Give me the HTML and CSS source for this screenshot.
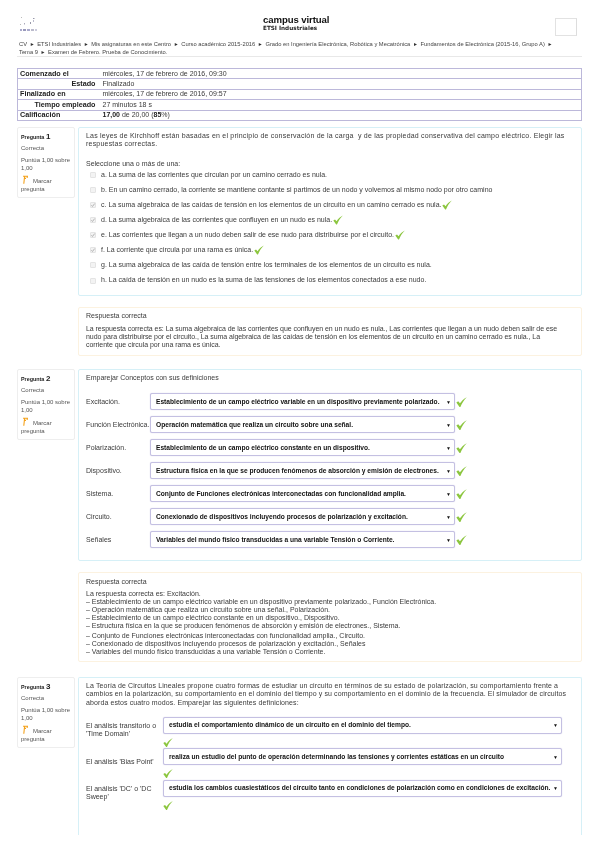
FILE: index.html
```html
<!DOCTYPE html>
<html lang="es">
<head>
<meta charset="utf-8">
<title>campus virtual</title>
<link rel="stylesheet" href="styles.css">
</head>
<body>
<svg class="defs" width="0" height="0" aria-hidden="true">
  <symbol id="ok" viewBox="0 0 10 10"><path d="M0.3 5.4 L2 4.4 L3.6 6.2 C5 4 7 2 9.8 0.6 C7.4 3 5.4 6 4 9.6 L3.2 9.6 Z" fill="#8cc63f"/></symbol>
  <symbol id="tk" viewBox="0 0 7 7"><path d="M1.6 3.8 L2.9 5.2 L5.5 1.8" fill="none" stroke="#a8a8a8" stroke-width="1"/></symbol>
  <symbol id="fl" viewBox="0 0 7 9"><path d="M1.8 8.8 L2.6 1.4 M1 1.2 H6 M5.2 1.2 V3 M2.6 3.4 H4" fill="none" stroke="#f4a21c" stroke-width="1.1"/></symbol>
</svg>

<header class="top">
  <svg class="logo" viewBox="0 0 18 15" aria-hidden="true">
    <rect x="1" y="0" width="1" height="1" fill="#bbb"/><rect x="13" y="1" width="1.5" height="1" fill="#99a"/><rect x="13" y="3" width="1" height="2" fill="#bbc"/>
    <rect x="4" y="6" width="1" height="1.5" fill="#aab"/><rect x="10" y="5" width="1" height="2" fill="#99a"/><rect x="0" y="7" width="1" height="1" fill="#bbb"/>
    <rect x="0" y="12" width="2" height="2" fill="#aac"/><rect x="3" y="12" width="3" height="2" fill="#99b"/><rect x="7" y="12" width="3" height="2" fill="#aac"/><rect x="11" y="12" width="3" height="2" fill="#bbc"/><rect x="15" y="12" width="2" height="2" fill="#ccd"/>
  </svg>
  <div class="brand">
    <div class="brand-name">campus virtual</div>
    <div class="brand-sub">ETSI Industriales</div>
  </div>
  <div class="topbox"></div>
</header>

<nav class="crumbs">CV <i>►</i> ETSI Industriales <i>►</i> Mis asignaturas en este Centro <i>►</i> Curso académico 2015-2016 <i>►</i> Grado en Ingeniería Electrónica, Robótica y Mecatrónica <i>►</i> Fundamentos de Electrónica (2015-16, Grupo A) <i>►</i> Tema 9 <i>►</i> Examen de Febrero. Prueba de Conocimiento.</nav>
<hr class="rule">

<table class="summary">
  <tr><th>Comenzado el</th><td>miércoles, 17 de febrero de 2016, 09:30</td></tr>
  <tr><th class="r">Estado</th><td>Finalizado</td></tr>
  <tr><th>Finalizado en</th><td>miércoles, 17 de febrero de 2016, 09:57</td></tr>
  <tr><th class="r">Tiempo empleado</th><td>27 minutos 18 s</td></tr>
  <tr><th>Calificación</th><td><b>17,00</b> de 20,00 (<b>85</b>%)</td></tr>
</table>

<section class="q q1">
  <aside class="info">
    <div class="qno">Pregunta <span>1</span></div>
    <div class="state">Correcta</div>
    <div class="grade">Puntúa 1,00 sobre 1,00</div>
    <div class="flag"><svg class="flagi"><use href="#fl"/></svg>Marcar pregunta</div>
  </aside>
  <div class="main m1">
    <p class="qtext">Las leyes de Kirchhoff están basadas en el principio de conservación de la carga&nbsp; y de las propiedad conservativa del campo eléctrico. Elegir las respuestas correctas.</p>
    <p class="prompt">Seleccione una o más de una:</p>
    <div class="opt"><span class="cb"></span>a. La suma de las corrientes que circulan por un camino cerrado es nula.</div>
    <div class="opt"><span class="cb"></span>b. En un camino cerrado, la corriente se mantiene contante si partimos de un nodo y volvemos al mismo nodo por otro camino</div>
    <div class="opt"><span class="cb"><svg><use href="#tk"/></svg></span>c. La suma algebraica de las caídas de tensión en los elementos de un circuito en un camino cerrado es nula.<svg class="ok"><use href="#ok"/></svg></div>
    <div class="opt"><span class="cb"><svg><use href="#tk"/></svg></span>d. La suma algebraica de las corrientes que confluyen en un nudo es nula.<svg class="ok"><use href="#ok"/></svg></div>
    <div class="opt"><span class="cb"><svg><use href="#tk"/></svg></span>e. Las corrientes que llegan a un nudo deben salir de ese nudo para distribuirse por el circuito.<svg class="ok"><use href="#ok"/></svg></div>
    <div class="opt"><span class="cb"><svg><use href="#tk"/></svg></span>f. La corriente que circula por una rama es única.<svg class="ok"><use href="#ok"/></svg></div>
    <div class="opt"><span class="cb"></span>g. La suma algebraica de las caída de tensión entre los terminales de los elementos de un circuito es nula.</div>
    <div class="opt"><span class="cb"></span>h. La caída de tensión en un nudo es la suma de las tensiones de los elementos conectados a ese nudo.</div>
  </div>
</section>

<div class="fb f1">
  <p class="fbhead">Respuesta correcta</p>
  <p class="fbtext">La respuesta correcta es: La suma algebraica de las corrientes que confluyen en un nudo es nula., Las corrientes que llegan a un nudo deben salir de ese nudo para distribuirse por el circuito., La suma algebraica de las caídas de tensión en los elementos de un circuito en un camino cerrado es nula., La corriente que circula por una rama es única.</p>
</div>

<section class="q q2">
  <aside class="info">
    <div class="qno">Pregunta <span>2</span></div>
    <div class="state">Correcta</div>
    <div class="grade">Puntúa 1,00 sobre 1,00</div>
    <div class="flag"><svg class="flagi"><use href="#fl"/></svg>Marcar pregunta</div>
  </aside>
  <div class="main m2">
    <p class="qtext">Emparejar Conceptos con sus definiciones</p>
    <div class="match">
      <div class="mrow"><span class="mlabel">Excitación.</span><div class="sel"><span>Establecimiento de un campo eléctrico variable en un dispositivo previamente polarizado.</span><i>▼</i></div><svg class="ok"><use href="#ok"/></svg></div>
      <div class="mrow"><span class="mlabel">Función Electrónica.</span><div class="sel"><span>Operación matemática que realiza un circuito sobre una señal.</span><i>▼</i></div><svg class="ok"><use href="#ok"/></svg></div>
      <div class="mrow"><span class="mlabel">Polarización.</span><div class="sel"><span>Establecimiento de un campo eléctrico constante en un dispositivo.</span><i>▼</i></div><svg class="ok"><use href="#ok"/></svg></div>
      <div class="mrow"><span class="mlabel">Dispositivo.</span><div class="sel"><span>Estructura física en la que se producen fenómenos de absorción y emisión de electrones.</span><i>▼</i></div><svg class="ok"><use href="#ok"/></svg></div>
      <div class="mrow"><span class="mlabel">Sistema.</span><div class="sel"><span>Conjunto de Funciones electrónicas interconectadas con funcionalidad amplia.</span><i>▼</i></div><svg class="ok"><use href="#ok"/></svg></div>
      <div class="mrow"><span class="mlabel">Circuito.</span><div class="sel"><span>Conexionado de dispositivos incluyendo procesos de polarización y excitación.</span><i>▼</i></div><svg class="ok"><use href="#ok"/></svg></div>
      <div class="mrow"><span class="mlabel">Señales</span><div class="sel"><span>Variables del mundo físico transducidas a una variable Tensión o Corriente.</span><i>▼</i></div><svg class="ok"><use href="#ok"/></svg></div>
    </div>
  </div>
</section>

<div class="fb f2">
  <p class="fbhead">Respuesta correcta</p>
  <p>La respuesta correcta es: Excitación.<br>– Establecimiento de un campo eléctrico variable en un dispositivo previamente polarizado., Función Electrónica.<br>– Operación matemática que realiza un circuito sobre una señal., Polarización.<br>– Establecimiento de un campo eléctrico constante en un dispositivo., Dispositivo.<br>– Estructura física en la que se producen fenómenos de absorción y emisión de electrones., Sistema.</p>
  <p class="cont">– Conjunto de Funciones electrónicas interconectadas con funcionalidad amplia., Circuito.<br>– Conexionado de dispositivos incluyendo procesos de polarización y excitación., Señales<br>– Variables del mundo físico transducidas a una variable Tensión o Corriente.</p>
</div>

<section class="q q3">
  <aside class="info">
    <div class="qno">Pregunta <span>3</span></div>
    <div class="state">Correcta</div>
    <div class="grade">Puntúa 1,00 sobre 1,00</div>
    <div class="flag"><svg class="flagi"><use href="#fl"/></svg>Marcar pregunta</div>
  </aside>
  <div class="main m3">
    <p class="qtext">La Teoría de Circuitos Lineales propone cuatro formas de estudiar un circuito en términos de su estado de polarización, su comportamiento frente a cambios en la polarización, su comportamiento en el dominio del tiempo y su comportamiento en el dominio de la frecuencia. El simulador de circuitos aborda estos cuatro modos. Emparejar las siguientes definiciones:</p>
    <div class="wide">
      <div class="wrow"><span class="mlabel">El análisis transitorio o 'Time Domain'</span><div class="wcol"><div class="sel"><span>estudia el comportamiento dinámico de un circuito en el dominio del tiempo.</span><i>▼</i></div><svg class="ok"><use href="#ok"/></svg></div></div>
      <div class="wrow"><span class="mlabel">El análisis 'Bias Point'</span><div class="wcol"><div class="sel"><span>realiza un estudio del punto de operación determinando las tensiones y corrientes estáticas en un circuito</span><i>▼</i></div><svg class="ok"><use href="#ok"/></svg></div></div>
      <div class="wrow"><span class="mlabel">El análisis 'DC' o 'DC Sweep'</span><div class="wcol"><div class="sel"><span>estudia los cambios cuasiestáticos del circuito tanto en condiciones de polarización como en condiciones de excitación.</span><i>▼</i></div><svg class="ok"><use href="#ok"/></svg></div></div>
    </div>
  </div>
</section>
</body>
</html>
```
FILE: styles.css
```css
* { box-sizing: border-box; }
html, body { margin: 0; padding: 0; background: #fff; }
body {
  font-family: "Liberation Sans", Arial, sans-serif;
  font-size: 7px;
  line-height: 8.3px;
  color: #3a3a3a;
  padding: 0 17px;
  height: 848px;
  overflow: hidden;
  filter: blur(0.3px);
}
p { margin: 0; }
.defs { position: absolute; }

.top { display: flex; align-items: flex-start; height: 41px; padding-top: 14px; }
.logo { width: 18px; height: 15px; margin: 3px 0 0 3px; flex: none; }
.brand { flex: 1; text-align: left; margin-left: 225px; }
.brand-name { font-size: 9.6px; line-height: 11px; font-weight: bold; color: #111; letter-spacing: -0.1px; }
.brand-sub { font-size: 5.7px; line-height: 7px; font-weight: bold; color: #222; font-family: "DejaVu Sans", sans-serif; }
.topbox { width: 22px; height: 18px; margin: 4px 5px 0 0; border: 1px solid #e2e2e2; border-right-color: #ddd; flex: none; }

.crumbs { font-size: 5.77px; line-height: 7.6px; padding: 0 25px 0 2px; height: 15px; color: #444; white-space: normal; }
.crumbs i { font-style: normal; font-size: 5px; color: #333; padding: 0 1px; }
.rule { margin: 0; border: 0; height: 1px; background: #e8e8e8; }

.summary { width: 565px; margin-top: 11px; border-collapse: collapse; border: 1px solid #bcb8da; }
.summary tr { height: 10.4px; border-bottom: 1px solid #bcb8da; }
.summary th { width: 81px; padding: 0 2px; text-align: left; font-size: 7.2px; line-height: 8px; color: #222; }
.summary th.r { text-align: right; padding-right: 3px; }
.summary td { padding: 0 0 0 4px; line-height: 8px; }
.summary b { color: #222; }

.q { display: flex; gap: 3px; }
.q1 { margin-top: 6px; }
.q2 { margin-top: 13px; }
.q3 { margin-top: 15px; }

.info {
  width: 58px; height: 71px; flex: none;
  padding: 4px 3px 0;
  border: 1px solid #eee;
  border-radius: 2px;
  font-size: 6px;
  line-height: 8px;
  color: #555;
}
.qno { font-weight: bold; color: #222; font-size: 5.4px; line-height: 9px; }
.qno span { font-size: 8px; }
.state { margin-top: 2px; }
.grade { margin-top: 4px; }
.flag { margin-top: 3px; }
.flagi { width: 7px; height: 9px; margin: 0 4px 0 1px; vertical-align: -1px; }

.main { flex: 1; border: 1px solid #d6f0f7; border-radius: 2px; padding: 4px 7px 0; }
.m1 { height: 169px; }
.m1 .qtext { letter-spacing: 0.21px; padding-right: 4px; }
.m2 { height: 192px; }
.m3 { height: 158px; border-bottom: 0; border-radius: 2px 2px 0 0; }
.m3 .qtext { letter-spacing: 0.1px; padding-right: 5px; }
.prompt { margin: 11.5px 0 -1px; }

.opt { display: flex; align-items: center; height: 15.1px; padding-left: 4px; white-space: nowrap; }
.cb { width: 6px; height: 6px; margin-right: 5px; flex: none; border: 1px solid #e4e4e4; border-radius: 1px; background: #f3f3f3; display: flex; }
.cb svg { width: 6px; height: 6px; margin: -1px; flex: none; }
.ok { width: 10px; height: 10px; flex: none; margin-left: 1px; }

.fb { margin-left: 61px; border: 1px solid #fcf2e0; border-radius: 2px; padding: 4px 7px 0; }
.fbhead { margin-bottom: 4.5px; }
.fbtext { letter-spacing: -0.05px; padding-right: 15px; }
.f1 { height: 49px; margin-top: 11px; }
.f2 { height: 90px; margin-top: 11px; padding-top: 5px; line-height: 8px; }
.cont { margin-top: 2px; }

.match { margin-top: 11px; display: flex; flex-direction: column; gap: 6px; }
.mrow { display: flex; align-items: center; height: 17px; }
.mlabel { flex: none; width: 64px; }
.sel {
  flex: 1;
  display: flex; align-items: center; justify-content: space-between;
  height: 17px;
  padding: 0 3px 0 5px;
  border: 1px solid #c4c0e2;
  box-shadow: 0 0 1px #c4c0e2;
  border-radius: 2px;
  background: #fff;
  color: #111;
  font-weight: bold;
  font-size: 6.63px;
  white-space: nowrap;
}
.sel i { font-style: normal; font-size: 5px; color: #111; }
.mrow .ok { width: 11px; height: 12px; margin-left: 1px; margin-right: 107px; }

.wide { margin-top: 10px; }
.wrow { display: flex; align-items: center; margin-bottom: 0.5px; }
.wrow .mlabel { width: 77px; padding-right: 3px; margin-bottom: 4px; }
.wcol { flex: 1; margin-right: 12px; }
.wcol .ok { display: block; width: 10px; height: 11px; margin: 3px 0 0; }
```
